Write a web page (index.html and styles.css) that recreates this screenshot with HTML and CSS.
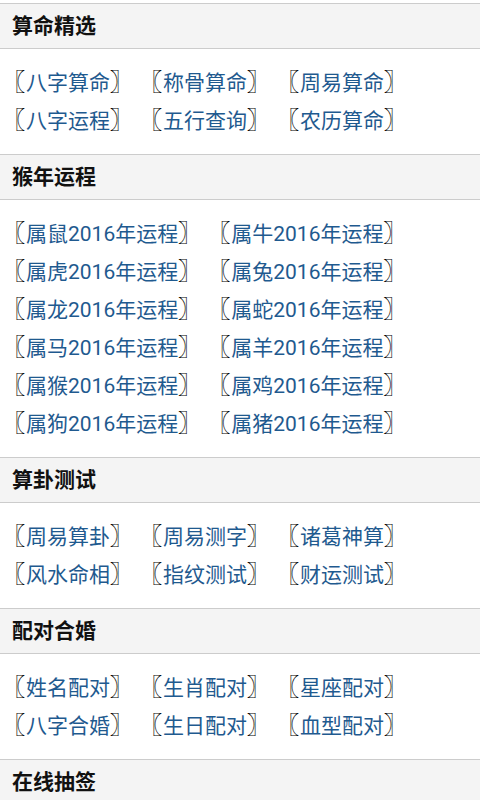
FILE: index.html
```html
<!DOCTYPE html>
<html lang="zh-CN">
<head>
<meta charset="utf-8">
<link rel="stylesheet" href="styles.css">
</head>
<body>
<div class="page">
  <section class="sec">
    <h2 class="sec-head">算命精选</h2>
    <div class="links three">
      <span class="item"><span class="br">〖</span><a href="#">八字算命</a><span class="br">〗</span></span>
      <span class="item"><span class="br">〖</span><a href="#">称骨算命</a><span class="br">〗</span></span>
      <span class="item"><span class="br">〖</span><a href="#">周易算命</a><span class="br">〗</span></span>
      <span class="item"><span class="br">〖</span><a href="#">八字运程</a><span class="br">〗</span></span>
      <span class="item"><span class="br">〖</span><a href="#">五行查询</a><span class="br">〗</span></span>
      <span class="item"><span class="br">〖</span><a href="#">农历算命</a><span class="br">〗</span></span>
    </div>
  </section>
  <section class="sec">
    <h2 class="sec-head">猴年运程</h2>
    <div class="links two">
      <span class="item"><span class="br">〖</span><a href="#">属鼠2016年运程</a><span class="br">〗</span></span>
      <span class="item"><span class="br">〖</span><a href="#">属牛2016年运程</a><span class="br">〗</span></span>
      <span class="item"><span class="br">〖</span><a href="#">属虎2016年运程</a><span class="br">〗</span></span>
      <span class="item"><span class="br">〖</span><a href="#">属兔2016年运程</a><span class="br">〗</span></span>
      <span class="item"><span class="br">〖</span><a href="#">属龙2016年运程</a><span class="br">〗</span></span>
      <span class="item"><span class="br">〖</span><a href="#">属蛇2016年运程</a><span class="br">〗</span></span>
      <span class="item"><span class="br">〖</span><a href="#">属马2016年运程</a><span class="br">〗</span></span>
      <span class="item"><span class="br">〖</span><a href="#">属羊2016年运程</a><span class="br">〗</span></span>
      <span class="item"><span class="br">〖</span><a href="#">属猴2016年运程</a><span class="br">〗</span></span>
      <span class="item"><span class="br">〖</span><a href="#">属鸡2016年运程</a><span class="br">〗</span></span>
      <span class="item"><span class="br">〖</span><a href="#">属狗2016年运程</a><span class="br">〗</span></span>
      <span class="item"><span class="br">〖</span><a href="#">属猪2016年运程</a><span class="br">〗</span></span>
    </div>
  </section>
  <section class="sec">
    <h2 class="sec-head">算卦测试</h2>
    <div class="links three">
      <span class="item"><span class="br">〖</span><a href="#">周易算卦</a><span class="br">〗</span></span>
      <span class="item"><span class="br">〖</span><a href="#">周易测字</a><span class="br">〗</span></span>
      <span class="item"><span class="br">〖</span><a href="#">诸葛神算</a><span class="br">〗</span></span>
      <span class="item"><span class="br">〖</span><a href="#">风水命相</a><span class="br">〗</span></span>
      <span class="item"><span class="br">〖</span><a href="#">指纹测试</a><span class="br">〗</span></span>
      <span class="item"><span class="br">〖</span><a href="#">财运测试</a><span class="br">〗</span></span>
    </div>
  </section>
  <section class="sec">
    <h2 class="sec-head">配对合婚</h2>
    <div class="links three">
      <span class="item"><span class="br">〖</span><a href="#">姓名配对</a><span class="br">〗</span></span>
      <span class="item"><span class="br">〖</span><a href="#">生肖配对</a><span class="br">〗</span></span>
      <span class="item"><span class="br">〖</span><a href="#">星座配对</a><span class="br">〗</span></span>
      <span class="item"><span class="br">〖</span><a href="#">八字合婚</a><span class="br">〗</span></span>
      <span class="item"><span class="br">〖</span><a href="#">生日配对</a><span class="br">〗</span></span>
      <span class="item"><span class="br">〖</span><a href="#">血型配对</a><span class="br">〗</span></span>
    </div>
  </section>
  <section class="sec">
    <h2 class="sec-head">在线抽签</h2>
  </section>
</div>
</body>
</html>
```

FILE: styles.css
```css
html, body {
  margin: 0;
  padding: 0;
  background: #ffffff;
}
body {
  font-family: Roboto, "Noto Sans CJK SC", sans-serif;
  color: #111111;
}
.page {
  padding-top: 3px;
}
.sec-head {
  margin: 0;
  height: 44px;
  line-height: 44px;
  padding: 0 12px;
  background: #f4f4f4;
  border-top: 1px solid #cccccc;
  border-bottom: 1px solid #cccccc;
  font-size: 21px;
  font-weight: 700;
  color: #111111;
}
.links {
  display: grid;
  padding: 15px 0 14px 2px;
  column-gap: 6px;
  justify-content: start;
  font-size: 21px;
  line-height: 38px;
  color: #111111;
}
.links.three {
  grid-template-columns: repeat(3, auto);
}
.links.two {
  grid-template-columns: repeat(2, auto);
}
.item {
  white-space: nowrap;
}
.br {
  font-family: "Noto Sans CJK SC", sans-serif;
  font-size: 23px;
  line-height: 1;
  font-weight: 900;
  color: #000000;
}
.item a {
  color: #1f5a8f;
  text-decoration: none;
  padding-left: 1px;
}
```
